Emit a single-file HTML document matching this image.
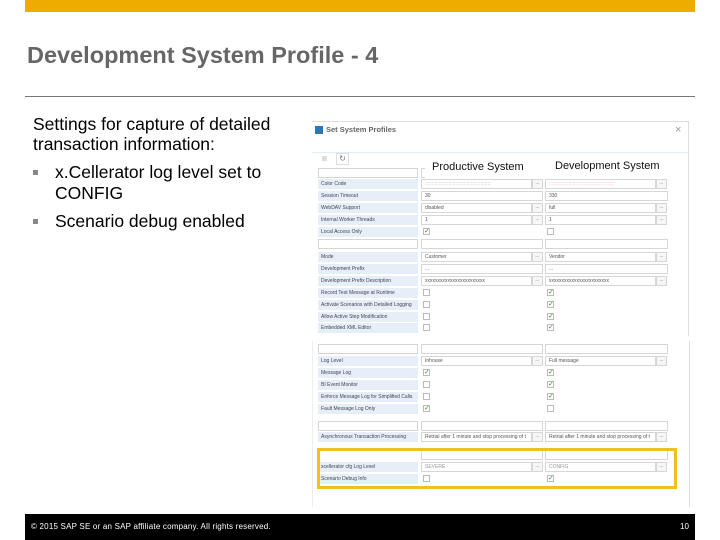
<!DOCTYPE html>
<html><head><meta charset="utf-8"><style>
body{margin:0;width:720px;height:540px;position:relative;background:#fff;font-family:"Liberation Sans",sans-serif;overflow:hidden}
.a{position:absolute}
.lab{position:absolute;left:318px;width:100px;height:10px;background:#e6eef7;font-size:5px;line-height:10px;color:#445;padding-left:3px;box-sizing:border-box;white-space:nowrap;overflow:hidden}
.f{position:absolute;height:10px;border:1px solid #d6d6d6;box-sizing:border-box;font-size:5px;line-height:8px;color:#555;padding-left:3px;background:#fff;white-space:nowrap;overflow:hidden}
.b{position:absolute;width:11px;height:10px;border:1px solid #d6d6d6;box-sizing:border-box;font-size:5px;line-height:6px;text-align:center;color:#777;background:#f6f6f6}
.cb{position:absolute;width:7px;height:7px;border:1px solid #bbb;box-sizing:border-box;font-size:7px;line-height:6px;color:#3a8a3a;text-align:center}
.bl{position:absolute;left:33px;font-size:17.5px;line-height:21px;color:#000}
.bl i{position:absolute;left:0;top:8px;width:5px;height:5px;background:#888}
</style></head><body>
<div class="a" style="left:25px;top:0;width:670px;height:12px;background:#f0ab00"></div>
<div class="a" style="left:27px;top:42px;font-size:23.5px;font-weight:bold;color:#666">Development System Profile - 4</div>
<div class="a" style="left:25px;top:96px;width:670px;height:1px;background:#777"></div>
<div class="a" style="left:33px;top:114px;font-size:17.5px;color:#000;line-height:20px">Settings for capture of detailed<br>transaction information:</div>
<div class="bl" style="top:162px"><i></i><span style="padding-left:22px">x.Cellerator log level set to</span><br><span style="padding-left:22px">CONFIG</span></div>
<div class="bl" style="top:211px"><i></i><span style="padding-left:22px">Scenario debug enabled</span></div>

<div class="a" style="left:312px;top:121px;width:376px;height:214px;border-top:1px solid #ddd;border-right:1px solid #ddd"></div>
<div class="a" style="left:312px;top:341px;width:376px;height:166px;border-right:1px solid #ddd;border-left:1px solid #eee"></div>
<div class="a" style="left:315px;top:126px;width:8px;height:8px;background:#2a78b8"></div>
<div class="a" style="left:326px;top:125px;font-size:7.5px;font-weight:bold;color:#666">Set System Profiles</div>
<div class="a" style="left:675px;top:124px;font-size:11px;color:#999">×</div>
<div class="a" style="left:312px;top:152px;width:376px;height:1px;background:#e3ecf5"></div>
<div class="a" style="left:322px;top:156px;width:5px;height:5px;background:#ddd"></div>
<div class="a" style="left:336px;top:153px;width:11px;height:10px;border:1px solid #ddd;font-size:8px;line-height:9px;text-align:center;color:#777">↻</div>
<div class="a" style="left:432px;top:161px;font-size:11px;color:#111">Productive System</div>
<div class="a" style="left:555px;top:160px;font-size:11px;color:#111">Development System</div>

<div class="f" style="left:318px;top:168px;width:100px"></div>
<div class="f" style="left:421px;top:168px;width:0;border-right:none"></div>

<div class="lab" style="top:179px">Color Code</div><div class="f" style="left:421px;top:179px;width:111px;color:#9ab">:::::::::::::::::::::::::::::::::::::::::::::::</div><div class="b" style="left:532px;top:179px">...</div><div class="f" style="left:545px;top:179px;width:111px;color:#e9a">:::::::::::::::::::::::::::::::::::::::::::::::</div><div class="b" style="left:656px;top:179px">...</div>
<div class="lab" style="top:191px">Session Timeout</div><div class="f" style="left:421px;top:191px;width:122px">30</div><div class="f" style="left:545px;top:191px;width:123px">330</div>
<div class="lab" style="top:203px">WebDAV Support</div><div class="f" style="left:421px;top:203px;width:111px">disabled</div><div class="b" style="left:532px;top:203px">...</div><div class="f" style="left:545px;top:203px;width:111px">full</div><div class="b" style="left:656px;top:203px">...</div>
<div class="lab" style="top:215px">Internal Worker Threads</div><div class="f" style="left:421px;top:215px;width:111px">1</div><div class="b" style="left:532px;top:215px">...</div><div class="f" style="left:545px;top:215px;width:111px">1</div><div class="b" style="left:656px;top:215px">...</div>
<div class="lab" style="top:227px">Local Access Only</div><div class="cb" style="left:423px;top:228px">✓</div><div class="cb" style="left:547px;top:228px"></div>
<div class="f" style="left:318px;top:239px;width:100px"></div><div class="f" style="left:421px;top:239px;width:122px"></div><div class="f" style="left:545px;top:239px;width:123px"></div>
<div class="lab" style="top:252px">Mode</div><div class="f" style="left:421px;top:252px;width:111px">Customer</div><div class="b" style="left:532px;top:252px">...</div><div class="f" style="left:545px;top:252px;width:111px">Vendor</div><div class="b" style="left:656px;top:252px">...</div>
<div class="lab" style="top:264px">Development Prefix</div><div class="f" style="left:421px;top:264px;width:122px">...</div><div class="f" style="left:545px;top:264px;width:123px">...</div>
<div class="lab" style="top:276px">Development Prefix Description</div><div class="f" style="left:421px;top:276px;width:111px">xxxxxxxxxxxxxxxxxxxxxxxx</div><div class="b" style="left:532px;top:276px">...</div><div class="f" style="left:545px;top:276px;width:111px">xxxxxxxxxxxxxxxxxxxxxxxx</div><div class="b" style="left:656px;top:276px">...</div>
<div class="lab" style="top:288px">Record Test Message at Runtime</div><div class="cb" style="left:423px;top:289px"></div><div class="cb" style="left:547px;top:289px">✓</div>
<div class="lab" style="top:300px">Activate Scenarios with Detailed Logging</div><div class="cb" style="left:423px;top:301px"></div><div class="cb" style="left:547px;top:301px">✓</div>
<div class="lab" style="top:312px">Allow Active Step Modification</div><div class="cb" style="left:423px;top:313px"></div><div class="cb" style="left:547px;top:313px">✓</div>
<div class="lab" style="top:323px">Embedded XML Editor</div><div class="cb" style="left:423px;top:324px"></div><div class="cb" style="left:547px;top:324px">✓</div>

<div class="f" style="left:318px;top:344px;width:100px"></div><div class="f" style="left:421px;top:344px;width:122px"></div><div class="f" style="left:545px;top:344px;width:123px"></div>
<div class="lab" style="top:356px">Log Level</div><div class="f" style="left:421px;top:356px;width:111px">Inhouse</div><div class="b" style="left:532px;top:356px">...</div><div class="f" style="left:545px;top:356px;width:111px">Full message</div><div class="b" style="left:656px;top:356px">...</div>
<div class="lab" style="top:368px">Message Log</div><div class="cb" style="left:423px;top:369px">✓</div><div class="cb" style="left:547px;top:369px">✓</div>
<div class="lab" style="top:380px">BI Event Monitor</div><div class="cb" style="left:423px;top:381px"></div><div class="cb" style="left:547px;top:381px">✓</div>
<div class="lab" style="top:392px">Enforce Message Log for Simplified Calls</div><div class="cb" style="left:423px;top:393px"></div><div class="cb" style="left:547px;top:393px">✓</div>
<div class="lab" style="top:404px">Fault Message Log Only</div><div class="cb" style="left:423px;top:405px">✓</div><div class="cb" style="left:547px;top:405px"></div>
<div class="f" style="left:318px;top:421px;width:100px"></div><div class="f" style="left:421px;top:421px;width:122px"></div><div class="f" style="left:545px;top:421px;width:123px"></div>
<div class="lab" style="top:432px">Asynchronous Transaction Processing</div><div class="f" style="left:421px;top:432px;width:111px">Retrial after 1 minute and stop processing of t</div><div class="b" style="left:532px;top:432px">...</div><div class="f" style="left:545px;top:432px;width:111px">Retrial after 1 minute and stop processing of t</div><div class="b" style="left:656px;top:432px">...</div>
<div class="f" style="left:421px;top:450px;width:122px;border-top:none"></div><div class="f" style="left:545px;top:450px;width:123px;border-top:none"></div>
<div class="lab" style="top:462px">xcellerator cfg Log Level</div><div class="f" style="left:421px;top:462px;width:111px;color:#999">SEVERE</div><div class="b" style="left:532px;top:462px">...</div><div class="f" style="left:545px;top:462px;width:111px;color:#999">CONFIG</div><div class="b" style="left:656px;top:462px">...</div>
<div class="lab" style="top:474px">Scenario Debug Info</div><div class="cb" style="left:423px;top:475px"></div><div class="cb" style="left:547px;top:475px">✓</div>
<div class="a" style="left:317px;top:448px;width:360px;height:41px;border:3px solid #f0c020;box-sizing:border-box"></div>

<div class="a" style="left:25px;top:514px;width:670px;height:26px;background:#000"></div>
<div class="a" style="left:31px;top:522px;font-size:8px;color:#fff;letter-spacing:0.2px">© 2015 SAP SE or an SAP affiliate company. All rights reserved.</div>
<div class="a" style="left:680px;top:522px;font-size:8px;color:#fff">10</div>
</body></html>
